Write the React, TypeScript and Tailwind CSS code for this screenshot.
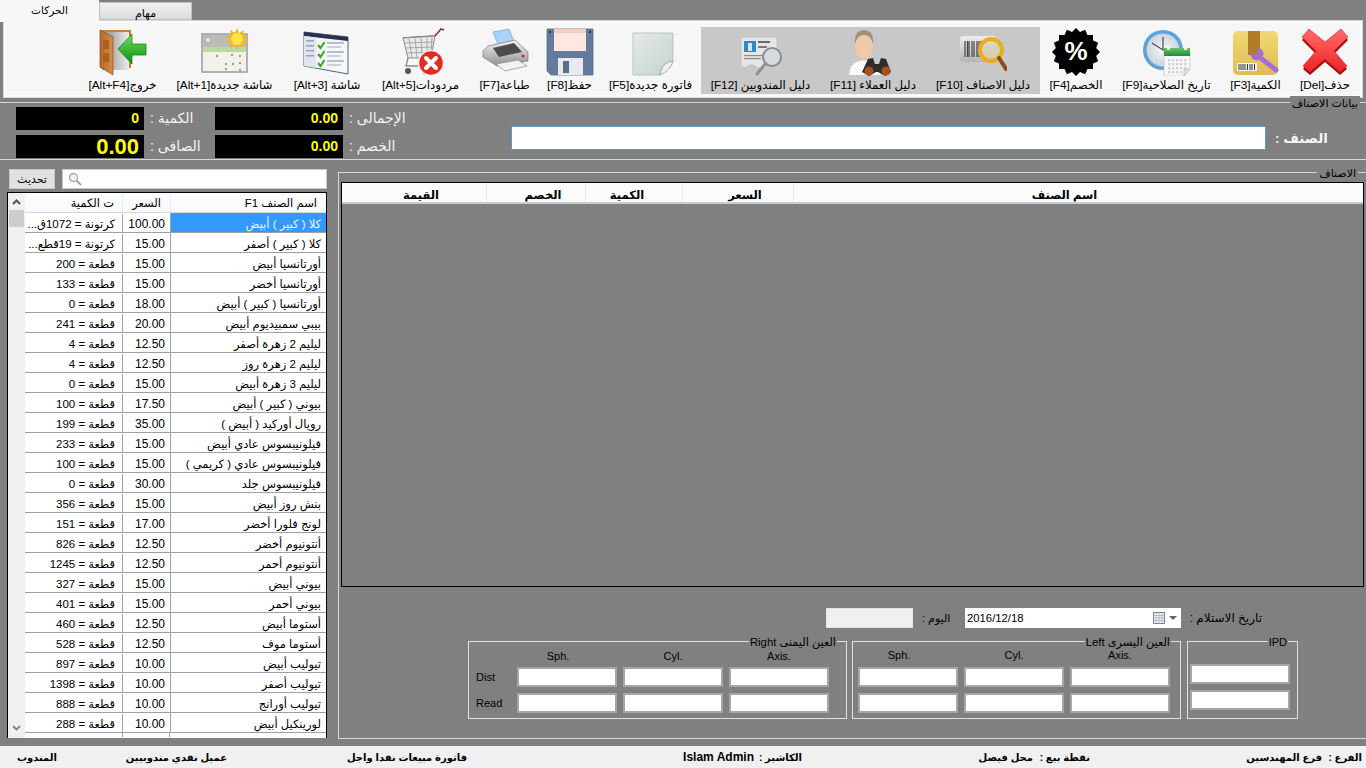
import React from "react";

const rows = [
  ["كلا ( كبير ) أبيض", "100.00", "كرتونة = 1072ق..."],
  ["كلا ( كبير ) أصفر", "15.00", "كرتونة = 19قطع..."],
  ["أورتانسيا أبيض", "15.00", "قطعة = 200"],
  ["أورتانسيا أخضر", "15.00", "قطعة = 133"],
  ["أورتانسيا ( كبير ) أبيض", "18.00", "قطعة = 0"],
  ["بيبي سمبيديوم أبيض", "20.00", "قطعة = 241"],
  ["ليليم 2 زهرة أصفر", "12.50", "قطعة = 4"],
  ["ليليم 2 زهرة روز", "12.50", "قطعة = 4"],
  ["ليليم 3 زهرة أبيض", "15.00", "قطعة = 0"],
  ["بيوني ( كبير ) أبيض", "17.50", "قطعة = 100"],
  ["رويال أوركيد ( أبيض )", "35.00", "قطعة = 199"],
  ["فيلونيبسوس عادي أبيض", "15.00", "قطعة = 233"],
  ["فيلونيبسوس عادي ( كريمي )", "15.00", "قطعة = 100"],
  ["فيلونيبسوس جلد", "30.00", "قطعة = 0"],
  ["بنش روز أبيض", "15.00", "قطعة = 356"],
  ["لونج فلورا أخضر", "17.00", "قطعة = 151"],
  ["أنتونيوم أخضر", "12.50", "قطعة = 826"],
  ["أنتونيوم أحمر", "12.50", "قطعة = 1245"],
  ["بيوني أبيض", "15.00", "قطعة = 327"],
  ["بيوني أحمر", "15.00", "قطعة = 401"],
  ["أستوما أبيض", "12.50", "قطعة = 460"],
  ["أستوما موف", "12.50", "قطعة = 528"],
  ["تيوليب أبيض", "10.00", "قطعة = 897"],
  ["تيوليب أصفر", "10.00", "قطعة = 1398"],
  ["تيوليب أورانج", "10.00", "قطعة = 888"],
  ["لورينكيل أبيض", "10.00", "قطعة = 288"],
];

const Svg = ({ children }: { children: React.ReactNode }) => (
  <svg width="48" height="48" viewBox="0 0 48 48">{children}</svg>
);

const badgePoints = Array.from({ length: 32 }, (_, i) => {
  const a = (i * Math.PI) / 16;
  const r = i % 2 === 0 ? 24 : 20.5;
  return `${(24 + r * Math.cos(a)).toFixed(1)},${(24 + r * Math.sin(a)).toFixed(1)}`;
}).join(" ");

const DoorIcon = () => (
  <Svg>
    <defs>
      <linearGradient id="doorIn" x1="0" x2="1" y1="0" y2="0"><stop offset="0" stopColor="#8c8c8c" /><stop offset="1" stopColor="#ececec" /></linearGradient>
      <linearGradient id="doorWood" x1="0" x2="1" y1="0" y2="0"><stop offset="0" stopColor="#b5662a" /><stop offset="1" stopColor="#d98d45" /></linearGradient>
      <linearGradient id="doorArrow" x1="0" x2="0" y1="0" y2="1"><stop offset="0" stopColor="#6ee05c" /><stop offset="1" stopColor="#0d8f12" /></linearGradient>
    </defs>
    <rect x="1" y="2" width="31" height="38" fill="#c67c3a" />
    <rect x="3" y="4" width="27" height="38" fill="url(#doorIn)" />
    <path d="M1 2 L14 9 L14 47 L1 39 Z" fill="url(#doorWood)" stroke="#8a4a1a" strokeWidth="0.7" />
    <rect x="4" y="12" width="6" height="9" fill="#a95f26" />
    <rect x="4" y="25" width="6" height="9" fill="#a95f26" />
    <path d="M47 16 L33 16 L33 6 L19 21 L33 36 L33 27 L47 27 Z" fill="url(#doorArrow)" stroke="#0c7a10" strokeWidth="0.7" />
  </Svg>
);

const NewScreenIcon = () => (
  <Svg>
    <rect x="1" y="6" width="45" height="38" fill="#f0f2e8" stroke="#9a9a9a" strokeWidth="1.5" />
    <rect x="2" y="7" width="43" height="12" fill="#b9bdb5" />
    <rect x="2" y="19" width="43" height="5" fill="#bcd9a0" />
    <circle cx="7" cy="12" r="3" fill="#dfe2dc" stroke="#8e8e8e" strokeWidth="0.6" />
    {[[15, 27], [30, 26], [38, 27], [24, 35], [31, 35], [38, 34], [24, 40], [38, 41]].map(([x, y]) => (
      <rect key={`${x}-${y}`} x={x} y={y} width="2" height="2" fill="#9a9a9a" />
    ))}
    <path d="M36 0 L38 5 L43 2 L42 7 L47 8 L43 11 L47 15 L42 15 L43 20 L38 17 L36 22 L34 17 L29 20 L30 15 L25 15 L29 11 L25 8 L30 7 L29 2 L34 5 Z" fill="#f5b81c" />
    <circle cx="36" cy="11" r="6" fill="#ffe14a" />
  </Svg>
);

const ChecklistIcon = () => (
  <Svg>
    <path d="M1 4 L45 9 L45 46 L1 38 Z" fill="#f4f6fa" stroke="#59627a" strokeWidth="1" />
    <path d="M1 4 L45 9 L45 13 L1 8 Z" fill="#27314f" />
    <path d="M1 8 L13 9.5 L13 40 L1 38 Z" fill="#dfe4ef" />
    {[17, 26, 35].map((y) => (
      <g key={y}>
        <path d={`M15 ${y} l2.5 3 l4 -6`} fill="none" stroke="#3aa51c" strokeWidth="2" />
        <rect x="24" y={y - 3} width="17" height="2" fill="#b8bdc8" />
        <rect x="24" y={y + 1} width="14" height="2" fill="#ccd0d8" />
      </g>
    ))}
    <rect x="3" y="12" width="8" height="1.5" fill="#9aa3b8" />
    <rect x="3" y="17" width="8" height="1.5" fill="#9aa3b8" />
    <rect x="3" y="22" width="8" height="1.5" fill="#9aa3b8" />
    <rect x="3" y="27" width="8" height="1.5" fill="#9aa3b8" />
  </Svg>
);

const ReturnsIcon = () => (
  <Svg>
    <path d="M6 10 L38 8 L44 1 L47 2" fill="none" stroke="#8a3a30" strokeWidth="1.6" />
    <path d="M6 10 L11 30 L34 30 L38 8 Z" fill="#e8e8e8" stroke="#8e8e8e" strokeWidth="1" />
    <path d="M12 10 L15 30 M18 9.5 L20 30 M24 9 L25 30 M30 9 L30 30 M35 8.5 L34 30 M7 15 L37 14 M8 20 L36 19 M10 25 L35 24" stroke="#9a9a9a" strokeWidth="0.8" fill="none" />
    <path d="M11 30 L9 38 L32 38" fill="none" stroke="#8e8e8e" strokeWidth="1.4" />
    <circle cx="11" cy="43" r="3" fill="#555" />
    <circle cx="28" cy="44" r="2.5" fill="#555" />
    <circle cx="34" cy="35" r="12.5" fill="#e62a22" stroke="#f3f3f3" strokeWidth="1.5" />
    <path d="M29 30 L39 40 M39 30 L29 40" stroke="#fff" strokeWidth="4" strokeLinecap="round" />
  </Svg>
);

const PrinterIcon = () => (
  <Svg>
    <defs>
      <linearGradient id="printBody" x1="0" x2="0" y1="0" y2="1"><stop offset="0" stopColor="#f4f4f4" /><stop offset="1" stopColor="#8f8f8f" /></linearGradient>
    </defs>
    <path d="M12 4 L28 1 L34 16 L18 19 Z" fill="#a9d4f5" stroke="#6fa5d0" strokeWidth="0.7" />
    <path d="M7 18 L34 12 L47 24 L47 33 L16 38 L2 29 L2 23 Z" fill="url(#printBody)" stroke="#7a7a7a" strokeWidth="0.7" />
    <path d="M12 20 L33 15 L41 24 L18 29 Z" fill="#4c4c4c" />
    <circle cx="42" cy="28" r="1.6" fill="#e02222" />
    <path d="M15 36 L37 32 L46 38 L24 43 Z" fill="#f2f2f2" stroke="#8a8a8a" strokeWidth="0.7" />
  </Svg>
);

const SaveIcon = () => (
  <Svg>
    <path d="M1 1 H47 V47 H5 L1 43 Z" fill="#657b9b" stroke="#4e5f7a" strokeWidth="0.7" />
    <rect x="8" y="1" width="32" height="22" fill="#fde8e1" />
    <rect x="8" y="1" width="32" height="4" fill="#f7cdbf" />
    <rect x="12" y="30" width="25" height="17" fill="#e8eaee" />
    <rect x="17" y="33" width="6" height="12" fill="#59708f" />
    <rect x="3" y="3" width="2" height="2" fill="#29344a" />
    <rect x="43" y="3" width="2" height="2" fill="#29344a" />
  </Svg>
);

const PageIcon = () => (
  <Svg>
    <defs>
      <linearGradient id="pageFill" x1="0" x2="1" y1="0" y2="1"><stop offset="0" stopColor="#e4e9e6" /><stop offset="1" stopColor="#c4d3cd" /></linearGradient>
    </defs>
    <path d="M6 5 H46 V33 L33 47 H6 Z" fill="url(#pageFill)" stroke="#b4b9b6" strokeWidth="0.8" />
    <path d="M46 33 C44 40 40 44 33 47 C34 39 38 34 46 33 Z" fill="#eeeeee" stroke="#8f8f8f" strokeWidth="0.7" />
  </Svg>
);

const CardIcon = () => (
  <Svg>
    <path d="M4 9 H40 V34 Q37 40 33 37 Q29 34 26 38 Q22 42 18 38 Q15 35 11 38 Q7 41 4 37 Z" fill="#e6e6e6" stroke="#b5b5b5" strokeWidth="0.6" />
    <rect x="7" y="13" width="12" height="11" fill="#2d8ac4" />
    <rect x="11" y="15" width="4" height="8" fill="#d6e6f0" />
    <rect x="21" y="13" width="12" height="2" fill="#6a6a6a" />
    <rect x="21" y="18" width="9" height="2" fill="#7a7a7a" />
    <rect x="7" y="27" width="20" height="1.2" fill="#8a8a8a" />
    <rect x="7" y="30" width="17" height="1.2" fill="#8a8a8a" />
    <circle cx="35" cy="29" r="9" fill="#d5dcdf" stroke="#8a8a8a" strokeWidth="2" />
    <path d="M28.5 35.5 L20 46" stroke="#8f8f8f" strokeWidth="3" strokeLinecap="round" />
  </Svg>
);

const ClientIcon = () => (
  <Svg>
    <path d="M0 47 Q1 35 10 33 L20 32 Q30 34 32 47 Z" fill="#fafafa" />
    <ellipse cx="15" cy="18" rx="9" ry="13" fill="#f2c9a8" />
    <path d="M6 16 Q5 2 15 2 Q25 2 24 16 Q22 7 15 7 Q8 7 6 16 Z" fill="#a3907a" />
    <path d="M19 31 L24 30 L26 36 L30 36 L32 30 L37 31 L42 44 L36 48 L29 44 L27 44 L20 48 L13 44 Z" fill="#2c2c2c" />
    <circle cx="20" cy="43" r="4.5" fill="#a9501d" />
    <circle cx="37" cy="43" r="4.5" fill="#a9501d" />
  </Svg>
);

const BarcodeIcon = () => (
  <Svg>
    <defs>
      <linearGradient id="bcBack" x1="0" x2="0" y1="0" y2="1"><stop offset="0" stopColor="#ededed" /><stop offset="1" stopColor="#b5b5b5" /></linearGradient>
    </defs>
    <rect x="1" y="8" width="36" height="26" rx="3" fill="url(#bcBack)" />
    <path d="M6 13 V29 M8.5 13 V29 M10 13 V29 M13 13 V29 M15 13 V29 M18 13 V29 M20 13 V29 M22 13 V29" stroke="#444" strokeWidth="1.2" />
    <circle cx="32" cy="22" r="11" fill="#d9d4b4" fillOpacity="0.75" stroke="#e9ad1d" strokeWidth="4" />
    <path d="M40 30 L47 41" stroke="#8c4a1f" strokeWidth="4" strokeLinecap="round" />
  </Svg>
);

const DiscountIcon = () => (
  <Svg>
    <polygon points={badgePoints} fill="#000" />
    <text x="24" y="32" textAnchor="middle" fill="#fff" fontSize="26" fontWeight="700" fontFamily="Liberation Sans">%</text>
  </Svg>
);

const ExpiryIcon = () => (
  <Svg>
    <defs>
      <radialGradient id="clockFace"><stop offset="0" stopColor="#f8f8f8" /><stop offset="1" stopColor="#c9d5de" /></radialGradient>
      <linearGradient id="calTop" x1="0" x2="0" y1="0" y2="1"><stop offset="0" stopColor="#6cc36a" /><stop offset="1" stopColor="#1c8d37" /></linearGradient>
    </defs>
    <circle cx="20" cy="22" r="20" fill="#5aa2dd" />
    <circle cx="20" cy="22" r="16.5" fill="url(#clockFace)" />
    <path d="M20 22 L20 9 M20 22 L9 15 M20 22 L30 24" stroke="#4a4a4a" strokeWidth="1.2" fill="none" />
    <path d="M21 23 H47 V41 L41 48 H21 Z" fill="#f7f7f7" stroke="#c2c2c2" strokeWidth="0.7" />
    <rect x="21" y="20" width="26" height="8" fill="url(#calTop)" />
    <rect x="24" y="18" width="3" height="4" fill="#e8f5e8" />
    <rect x="41" y="18" width="3" height="4" fill="#e8f5e8" />
    {[31, 35, 39, 43].map((y) => [25, 29, 33, 37, 41].map((x) => (
      <rect key={`${x}-${y}`} x={x} y={y} width="2.4" height="2.4" fill="#ccd2d6" />
    )))}
    <path d="M47 41 L41 41 L41 48 Z" fill="#dedede" stroke="#b0b0b0" strokeWidth="0.6" />
  </Svg>
);

const BoxIcon = () => (
  <Svg>
    <defs>
      <linearGradient id="boxFill" x1="0" x2="0" y1="0" y2="1"><stop offset="0" stopColor="#f2d875" /><stop offset="1" stopColor="#dfbb55" /></linearGradient>
    </defs>
    <rect x="1" y="3" width="45" height="44" rx="5" fill="url(#boxFill)" />
    <rect x="16" y="3" width="12" height="24" fill="#b07d2a" />
    <rect x="5" y="35" width="20" height="8" fill="#f4f4f4" />
    <path d="M7 36 V42 M9 36 V42 M11 36 V42 M13 36 V42 M15.5 36 V42 M18 36 V42 M20 36 V42 M22.5 36 V42" stroke="#333" strokeWidth="1" />
    <path d="M26 28 L44 42" stroke="#a46fd2" strokeWidth="5" strokeLinecap="round" />
    <circle cx="25" cy="26" r="6.5" fill="#a46fd2" />
    <path d="M17 24 L25 27 L27 19 L20 17 Z" fill="#b07d2a" />
  </Svg>
);

const DeleteIcon = () => {
  const cross = "M8 1 L24 14 L40 1 L47 9 L33 23 L46 38 L39 44 L24 31 L9 44 L2 38 L15 23 L1 9 Z";
  return (
    <Svg>
      <defs>
        <linearGradient id="crossFill" x1="0" x2="0" y1="0" y2="1"><stop offset="0" stopColor="#ff6b6b" /><stop offset="1" stopColor="#ef2424" /></linearGradient>
      </defs>
      <path d={cross} transform="translate(0 3)" fill="#a80d10" />
      <path d={cross} fill="url(#crossFill)" stroke="#e21d22" strokeWidth="0.6" />
    </Svg>
  );
};

const tools = [
  { w: "w-[87px]", icon: <DoorIcon />, label: "خروج[Alt+F4]" },
  { w: "w-[117px]", icon: <NewScreenIcon />, label: "شاشة جديدة[Alt+1]" },
  { w: "w-[88px]", icon: <ChecklistIcon />, label: "شاشة [Alt+3]" },
  { w: "w-[99px]", icon: <ReturnsIcon />, label: "مردودات[Alt+5]" },
  { w: "w-[69px]", icon: <PrinterIcon />, label: "طباعة[F7]" },
  { w: "w-[61px]", icon: <SaveIcon />, label: "حفظ[F8]" },
  { w: "w-[101px]", icon: <PageIcon />, label: "فاتورة جديدة[F5]" },
  { w: "w-[119px]", icon: <CardIcon />, label: "دليل المندوبين [F12]", on: true },
  { w: "w-[106px]", icon: <ClientIcon />, label: "دليل العملاء [F11]", on: true },
  { w: "w-[114px]", icon: <BarcodeIcon />, label: "دليل الاصناف [F10]", on: true },
  { w: "w-[72px]", icon: <DiscountIcon />, label: "الخصم[F4]" },
  { w: "w-[109px]", icon: <ExpiryIcon />, label: "تاريخ الصلاحية[F9]" },
  { w: "w-[69px]", icon: <BoxIcon />, label: "الكمية[F3]" },
  { w: "w-[70px]", icon: <DeleteIcon />, label: "حذف[Del]" },
];

const Readout = ({ value, big }: { value: string; big?: boolean }) => (
  <div className={`w-[128px] h-[23px] bg-black flex items-center justify-end pr-[5px] text-[#ffff00] font-bold ${big ? "text-[22px]" : "text-[14px]"}`}>
    {value}
  </div>
);

const Field = ({ w = "w-[100px]" }: { w?: string }) => (
  <div className={`${w} h-[20px] bg-white border-2 border-[#a6a6a6]`} />
);

export default function App() {
  return (
    <div className="w-[1366px] h-[768px] overflow-hidden bg-[#808080] flex flex-col text-[12px] text-black [font-family:'Liberation_Sans','DejaVu_Sans',sans-serif]">
      {/* Tabs */}
      <div className="h-[20px] flex items-end">
        <div dir="rtl" className="w-[99px] h-[22px] -mb-[2px] z-10 bg-[#f7f7f7] flex items-center justify-center pb-[1px] text-[10.5px]">الحركات</div>
        <div dir="rtl" className="w-[93px] h-[18px] bg-gradient-to-b from-[#f0f0f0] to-[#dcdcdc] border border-[#c0c0c0] flex items-center justify-center pt-[4px] text-[11px]">مهام</div>
      </div>

      {/* Ribbon */}
      <div className="mx-[4px] mt-px h-[76px] bg-[#f6f6f6] border-2 border-[#fbfbfb] outline outline-[#d8d8d8] pt-[4px] flex justify-end">
        {tools.map((t) => (
          <div key={t.label} className={`${t.w} h-[67px] flex flex-col items-center ${t.on ? "bg-[#c8c8c8]" : ""}`}>
            <div className="pt-[1px] h-[49px]">{t.icon}</div>
            <div dir="rtl" className="mt-[1px] h-[16px] leading-[16px] text-[11.8px] whitespace-nowrap">{t.label}</div>
          </div>
        ))}
      </div>

      {/* Item data */}
      <div className="relative mt-[5px] h-[58px] border-y border-[#d6d6d6] flex pl-[16px] pt-[4px]">
        <div dir="rtl" className="absolute right-[6px] -top-[7px] px-[2px] bg-[#808080] text-[11px] leading-[14px]">بيانات الاصناف</div>
        <div className="w-[199px] flex flex-col gap-[5px]">
          <div className="flex items-center">
            <Readout value="0" />
            <span dir="rtl" className="ml-[6px] text-[14px] text-[#f2f2f2]">الكمية :</span>
          </div>
          <div className="flex items-center">
            <Readout value="0.00" big />
            <span dir="rtl" className="ml-[6px] text-[14px] text-[#f2f2f2]">الصافى :</span>
          </div>
        </div>
        <div className="w-[296px] flex flex-col gap-[5px]">
          <div className="flex items-center">
            <Readout value="0.00" />
            <span dir="rtl" className="ml-[6px] text-[14px] text-[#f2f2f2]">الإجمالى :</span>
          </div>
          <div className="flex items-center">
            <Readout value="0.00" />
            <span dir="rtl" className="ml-[6px] text-[14px] text-[#f2f2f2]">الخصم :</span>
          </div>
        </div>
        <div className="mt-[19px] w-[755px] h-[24px] bg-white border border-[#5b9bd5]" />
        <div dir="rtl" className="ml-[9px] mt-[22px] text-[13.5px] font-bold text-[#f5f5f5]">الصنف :</div>
      </div>

      {/* Main */}
      <div className="h-[586px] flex">
        {/* Items list */}
        <div className="w-[338px] shrink-0 pt-[9px]">
          <div className="flex pl-[9px]">
            <div dir="rtl" className="w-[46px] h-[20px] bg-[#e1e1e1] border border-[#c8c8c8] flex items-center justify-center text-[11px]">تحديث</div>
            <div className="ml-[7px] w-[265px] h-[20px] bg-white border border-[#c8c8c8] pl-[5px] flex items-center">
              <svg width="14" height="14" viewBox="0 0 14 14">
                <circle cx="5.5" cy="5.5" r="4" fill="#eef2f5" stroke="#a8a8a8" strokeWidth="1.3" />
                <path d="M8.5 8.5 L13 13" stroke="#8a8a8a" strokeWidth="1.6" />
              </svg>
            </div>
          </div>
          <div className="ml-[7px] mt-[3px] w-[320px] h-[546px] border border-black border-b-0 flex overflow-hidden bg-white">
            <div className="w-[17px] shrink-0 bg-[#f0f0f0] flex flex-col items-center justify-between">
              <div className="w-full">
                <div className="h-[17px] flex items-center justify-center">
                  <svg width="9" height="6" viewBox="0 0 9 6"><path d="M1 5 L4.5 1.5 L8 5" fill="none" stroke="#555" strokeWidth="2" /></svg>
                </div>
                <div className="mx-[1px] h-[17px] bg-[#cdcdcd]" />
              </div>
              <div className="h-[17px] mb-[2px] flex items-center justify-center">
                <svg width="9" height="6" viewBox="0 0 9 6"><path d="M1 1 L4.5 4.5 L8 1" fill="none" stroke="#8a8a8a" strokeWidth="2" /></svg>
              </div>
            </div>
            <div className="flex-1 min-w-0">
              <div dir="rtl" className="h-[20px] flex border-b border-[#d8d8d8] bg-gradient-to-b from-white to-[#f7f8fa] text-[11.5px]">
                <div className="w-[156px] pr-[9px] border-l border-[#e3edf7] leading-[20px]">اسم الصنف F1</div>
                <div className="w-[48px] pr-[9px] border-l border-[#e3edf7] leading-[20px]">السعر</div>
                <div className="flex-1 pr-[8px] leading-[20px]">ت الكمية</div>
              </div>
              {rows.map(([name, price, qty], i) => (
                <div key={name} dir="rtl" className={`h-[20px] flex border-b border-[#a0a0a0] pt-[1px] leading-[20px] text-[11.5px] ${i === 0 ? "text-[#eef6ff]" : ""}`}>
                  <div className={`w-[156px] -mt-[1px] pt-[1px] pr-[5px] border-l border-[#a0a0a0] whitespace-nowrap overflow-hidden ${i === 0 ? "bg-[#3399ff]" : ""}`}>{name}</div>
                  <div dir="ltr" className="w-[48px] pr-[5px] border-l border-[#a0a0a0] text-right text-black text-[12px]">{price}</div>
                  <div className="flex-1 pr-[7px] text-black whitespace-nowrap overflow-hidden">{qty}</div>
                </div>
              ))}
              <div className="h-[4px] flex justify-start">
                <div className="ml-[97px] w-[48px] border-x border-[#a0a0a0]" />
              </div>
            </div>
          </div>
        </div>

        {/* Invoice lines */}
        <div className="relative flex-1 mt-[12px] h-[567px] border-l border-y border-[#d6d6d6]">
          <div dir="rtl" className="absolute right-[8px] -top-[6px] px-[2px] bg-[#808080] text-[11px] leading-[13px]">الاصناف</div>
          <div className="ml-[2px] mt-[9px] mr-[2px] h-[405px] border border-black">
            <div dir="rtl" className="h-[21px] flex bg-[#fcfcfc] border-b-2 border-[#c8ccd0] font-bold text-[11.5px] leading-[24px] text-center">
              <div className="w-[42px]" />
              <div className="w-[528px] pl-[14px] border-l border-[#e3edf7]">اسم الصنف</div>
              <div className="w-[111px] pl-[14px] border-l border-[#e3edf7]">السعر</div>
              <div className="w-[97px] border-l border-[#e3edf7] pr-[14px]">الكمية</div>
              <div className="w-[99px] pl-[14px] border-l border-[#e3edf7]">الخصم</div>
              <div className="flex-1 pl-[14px]">القيمة</div>
            </div>
          </div>

          <div className="mt-[21px] ml-[487px] h-[20px] flex items-center">
            <div className="w-[87px] h-[20px] bg-[#f0f0f0] border border-[#e4e4e4]" />
            <div dir="rtl" className="w-[52px] pr-[9px] text-[11px]"><span className="block text-left pl-[9px]">اليوم :</span></div>
            <div className="w-[216px] h-[20px] bg-white pl-[2px] flex items-center justify-between pr-[3px]">
              <span className="text-[11.3px]">2016/12/18</span>
              <span className="flex items-center gap-[4px]">
                <svg width="12" height="12" viewBox="0 0 12 12">
                  <rect x="0.5" y="0.5" width="11" height="11" fill="#eef1f5" stroke="#7f8794" />
                  <path d="M3 1 V11 M6 1 V11 M9 1 V11 M1 3.5 H11 M1 6 H11 M1 8.5 H11" stroke="#a7adb8" strokeWidth="0.7" />
                </svg>
                <svg width="9" height="5" viewBox="0 0 9 5"><path d="M0 0 H8 L4 4 Z" fill="#56657f" /></svg>
              </span>
            </div>
            <div dir="rtl" className="ml-[8px] w-[73px] text-[12px] whitespace-nowrap">تاريخ الاستلام :</div>
          </div>

          <div className="mt-[13px] ml-[129px] flex">
            {/* Right eye */}
            <div className="relative w-[379px] h-[78px] border border-[#e0e0e0]">
              <div dir="rtl" className="absolute right-[9px] -top-[6px] px-[1px] bg-[#808080] text-[11.3px] leading-[13px] whitespace-nowrap">العين اليمنى Right</div>
              <div className="ml-[48px] mt-[6px] w-[312px] grid grid-cols-3 gap-x-[6px] text-[11px] leading-[16px] text-center">
                <div className="pr-[18px]">Sph.</div><div>Cyl.</div><div>Axis.</div>
              </div>
              <div className="mt-[3px] flex flex-col gap-[6px]">
                <div className="flex items-center gap-[6px]">
                  <span className="ml-[7px] w-[35px] text-[11px]">Dist</span>
                  <Field /><Field /><Field />
                </div>
                <div className="flex items-center gap-[6px]">
                  <span className="ml-[7px] w-[35px] text-[11px]">Read</span>
                  <Field /><Field /><Field />
                </div>
              </div>
            </div>

            {/* Left eye */}
            <div className="relative ml-[5px] w-[329px] h-[78px] border border-[#e0e0e0]">
              <div dir="rtl" className="absolute right-[9px] -top-[6px] px-[1px] bg-[#808080] text-[11.3px] leading-[13px] whitespace-nowrap">العين اليسرى Left</div>
              <div className="ml-[5px] mt-[5px] w-[312px] grid grid-cols-3 gap-x-[6px] text-[11px] leading-[16px] text-center">
                <div className="pr-[18px]">Sph.</div><div>Cyl.</div><div>Axis.</div>
              </div>
              <div className="mt-[4px] ml-[5px] flex flex-col gap-[6px]">
                <div className="flex gap-[6px]"><Field /><Field /><Field /></div>
                <div className="flex gap-[6px]"><Field /><Field /><Field /></div>
              </div>
            </div>

            {/* IPD */}
            <div className="relative ml-[6px] w-[111px] h-[78px] border border-[#e0e0e0] pl-[2px] pt-[22px]">
              <div className="absolute right-[9px] -top-[6px] px-[1px] bg-[#808080] text-[11px] leading-[13px]">IPD</div>
              <div className="flex flex-col gap-[6px]"><Field /><Field /></div>
            </div>
          </div>
        </div>
      </div>

      {/* Status bar */}
      <div dir="rtl" className="h-[22px] bg-[#f0f0f0] flex items-center font-bold text-[10px] whitespace-nowrap pr-[4px]">
        <span className="w-[40px]">الفرع :</span>
        <span className="w-[232px]">فرع المهندسين</span>
        <span className="w-[57px]">نقطة بيع :</span>
        <span className="w-[231px]">محل فيصل</span>
        <span className="w-[48px]">الكاشير :</span>
        <span dir="ltr" className="w-[287px] text-right text-[12px]">Islam Admin</span>
        <span className="w-[240px]">فاتورة مبيعات نقدا واجل</span>
        <span className="w-[170px]">عميل نقدي مندوبيين</span>
        <span>المندوب</span>
      </div>
    </div>
  );
}
